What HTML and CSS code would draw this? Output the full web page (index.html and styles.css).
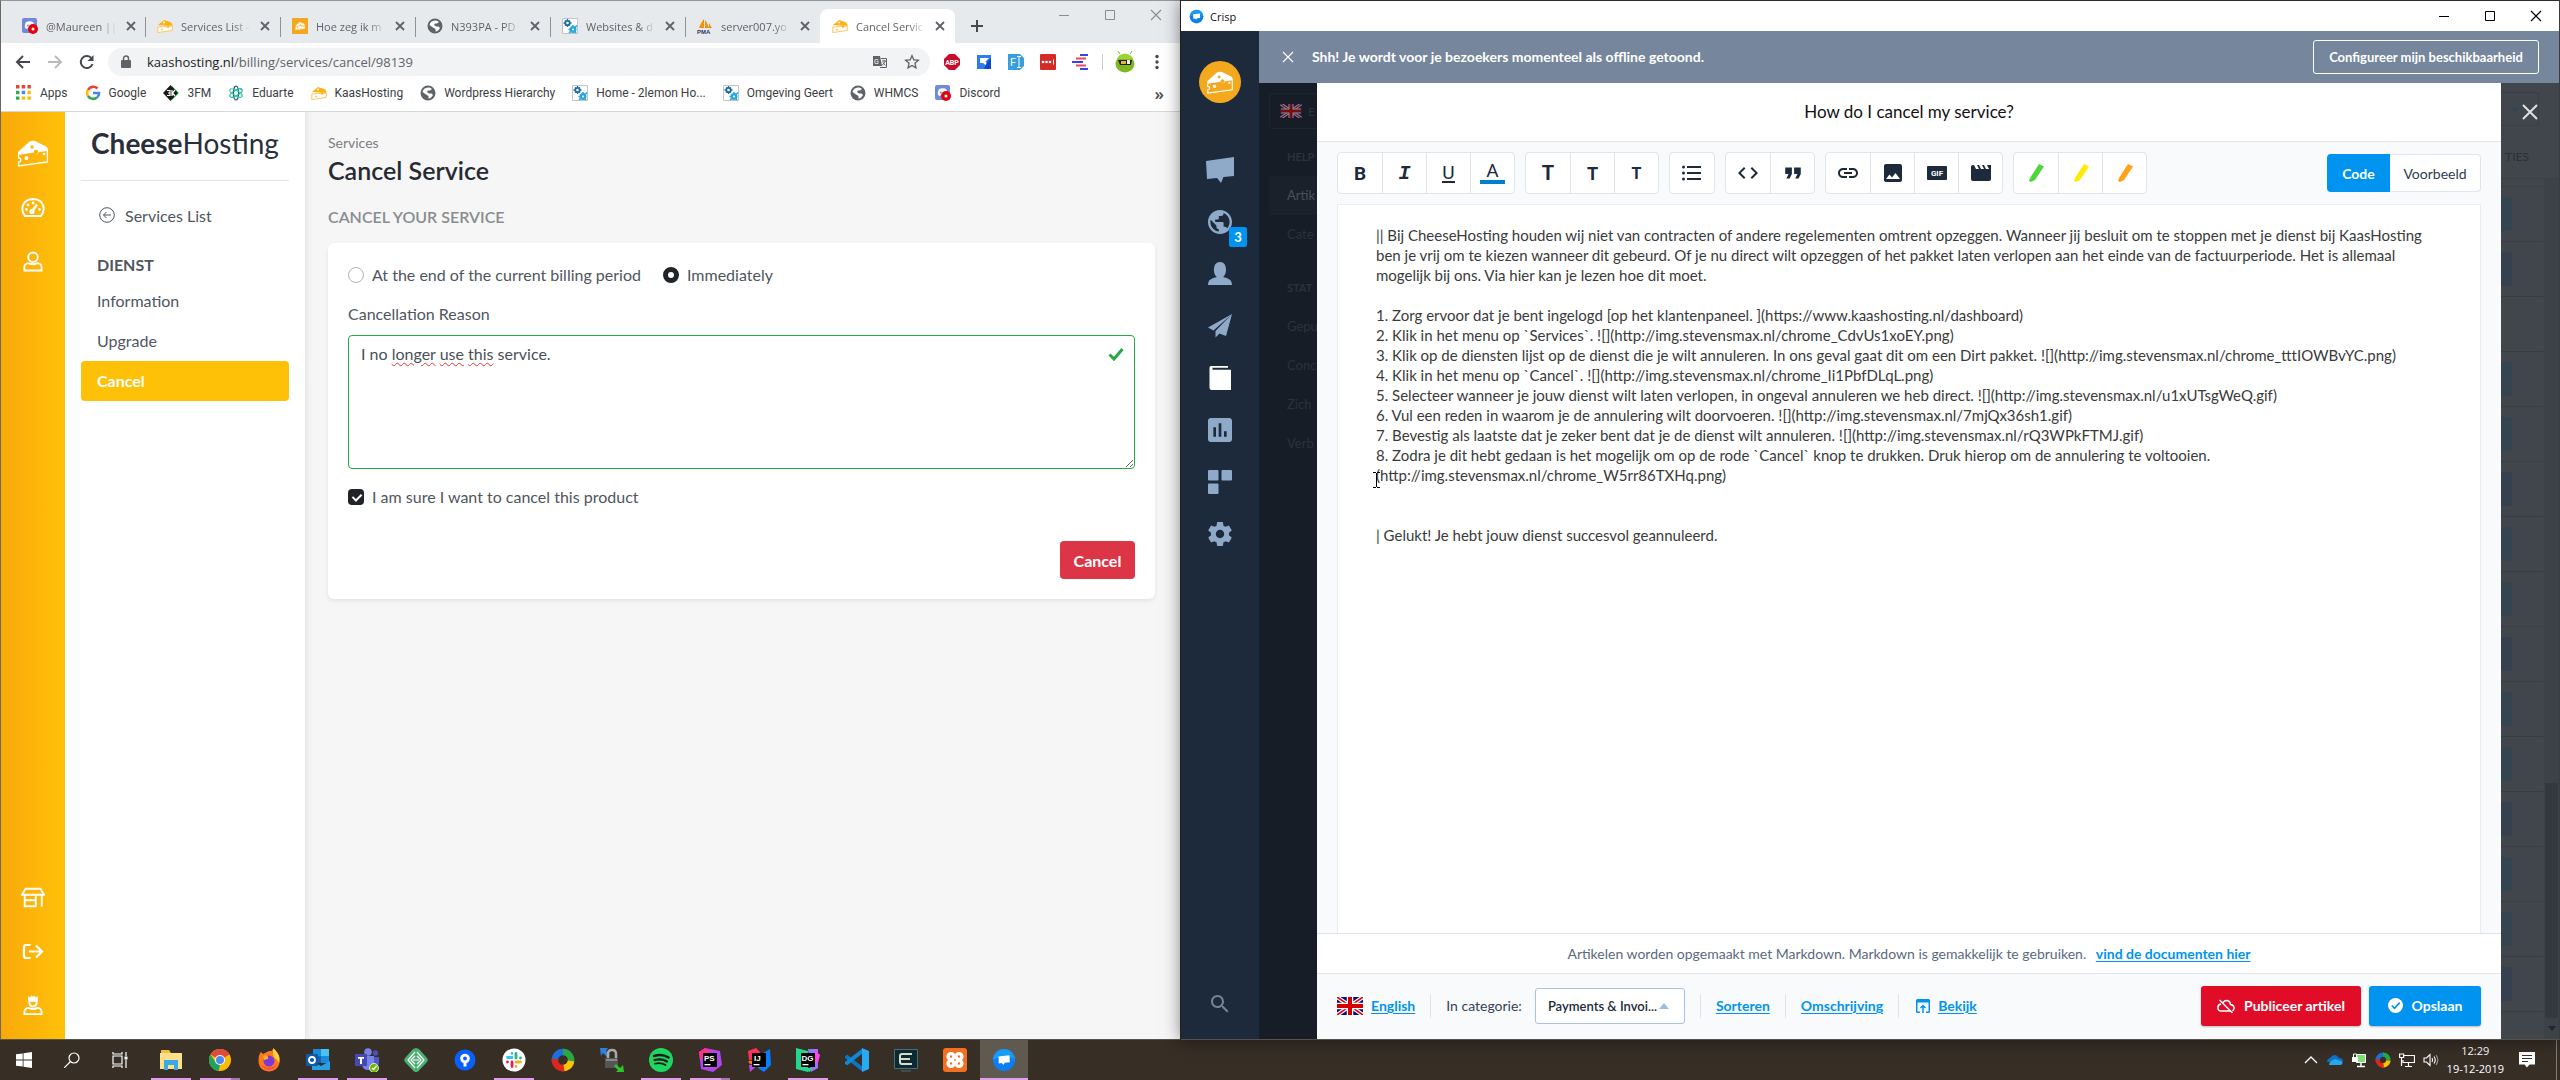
FILE: index.html
```
<!DOCTYPE html>
<html lang="nl">
  <head>
    <meta charset="UTF-8">
    <title>Desktop</title>
    <link rel="stylesheet" href="styles.css">
  </head>
  <body>

    <!-- shared icons -->
    <svg class="sprite" aria-hidden="true">
      <symbol id="i-close" viewBox="0 0 12 12"><path d="M2 2l8 8M10 2l-8 8" fill="none" stroke="currentColor" stroke-width="1.8"/></symbol>
      <symbol id="i-thinclose" viewBox="0 0 12 12"><path d="M1 1l10 10M11 1L1 11" fill="none" stroke="currentColor" stroke-width="1.1"/></symbol>
      <symbol id="i-min" viewBox="0 0 12 12"><path d="M1 6.500h10" fill="none" stroke="currentColor"/></symbol>
      <symbol id="i-max" viewBox="0 0 12 12"><path d="M1.500 1.500h9v9h-9z" fill="none" stroke="currentColor"/></symbol>
      <symbol id="i-cheese" viewBox="0 0 32 26"><path fill="currentColor" d="M1 13L13 2c2-1.500 4-1 6-.5l9 4c2 1 3 2 3 4zM1 15l30-4v11L1 26v-4c3 0 3-4 0-4z"/><g fill="var(--hole)"><circle cx="9" cy="18.500" r="2.200"/><circle cx="17" cy="8" r="1.800"/><circle cx="20" cy="12.500" r="2"/><circle cx="26" cy="14.500" r="1.600"/><path d="M3 23.500v1l26-3.500v-1z"/></g></symbol>
      <symbol id="i-cheese-line" viewBox="0 0 32 27"><path fill="currentColor" d="M1 12L12 2c3-2 6-1 8 0l8 4c3 1.500 3 3 3 5L22 12c-1 3-4 3-5 .6L1 15z"/><path fill="none" stroke="currentColor" stroke-width="1.300" d="M1.600 15v3c3 0 3 4 0 4v4L30.400 22V11"/><circle cx="9.500" cy="18" r="2" fill="currentColor"/><circle cx="27" cy="14" r="1.300" fill="currentColor"/><circle cx="15" cy="7" r="1.700" fill="var(--hole)"/><circle cx="19" cy="12" r="2.200" fill="var(--hole)"/></symbol>
      <symbol id="i-cheese-fav" viewBox="0 0 16 16"><path fill="#ffb012" d="M1 7l6-5 6 2c2 1 2.500 2 2.500 4z"/><path fill="#fff" stroke="#ffc65c" d="M.8 9l14.500-1v4.500L.8 14.500z"/><circle cx="7" cy="4.500" r="1" fill="#fff"/><circle cx="5" cy="11.500" r="1" fill="#ffc65c"/><circle cx="11" cy="8.500" r="1.200" fill="#ffb012"/></symbol>
      <symbol id="i-earth" viewBox="2 2 20 20"><path fill="currentColor" d="M12 2C6.480 2 2 6.480 2 12s4.480 10 10 10 10-4.480 10-10S17.520 2 12 2zm-1 17.930c-3.950-.49-7-3.850-7-7.930 0-.62.08-1.210.21-1.790L9 15v1c0 1.100.9 2 2 2v1.930zm6.900-2.540c-.26-.81-1-1.390-1.900-1.390h-1v-3c0-.55-.45-1-1-1H8v-2h2c.55 0 1-.45 1-1V7h2c1.100 0 2-.9 2-2v-.41c2.930 1.190 5 4.060 5 7.410 0 2.080-.8 3.970-2.100 5.390z"/></symbol>
      <symbol id="i-wpglobe" viewBox="0 0 16 16"><circle cx="8" cy="8" r="7.500" fill="#5f6368"/><path fill="#fff" d="M8 2.500c2 0 3 .6 4 1.500l-2 1.500H8L7 7l2 1.500h2.500L13 10c-1 2-2.500 3.300-4.500 3.500V11L6 9.500 2.500 7C3 4.500 5 2.600 8 2.500z"/></symbol>
      <symbol id="i-gears" viewBox="0 0 16 16"><path fill="#fff" stroke="#c4c4c4" d="M.5.5h15v15H.5z"/><circle cx="5.500" cy="5" r="2.200" fill="none" stroke="#1b6f9c" stroke-width="1.800"/><path stroke="#1b6f9c" stroke-width="1.300" d="M5.500 1v1.500M5.500 7.500V9M1.500 5H3M8 5h1.500M3 2.500l1 1M7 6.500l1 1M8 2.500l-1 1M3 7.500l1-1"/><circle cx="11" cy="11.500" r="2.300" fill="none" stroke="#2ba7e0" stroke-width="2.400"/><path stroke="#2ba7e0" stroke-width="1.600" d="M11 7v2M7 15l2-2M15 7.500l-2 2M6.500 11.500H8M14 15l-1-1"/></symbol>
      <symbol id="i-discord" viewBox="0 0 16 16"><rect width="15" height="15" rx="2" fill="#7289da"/><path fill="#fff" d="M4 4c3-1 5-1 7 0 1 2 2 4 1.500 6l-2 1-1-1H6l-1 1-2-1C2.500 8 3 6 4 4z"/><circle cx="5.800" cy="7.500" r="1" fill="#7289da"/><circle cx="11" cy="11" r="5" fill="#e3000f"/><circle cx="11" cy="11" r="1.500" fill="#fff"/></symbol>
      <symbol id="i-crisp" viewBox="0 0 24 24"><circle cx="12" cy="12" r="11" fill="#0d7df2"/><path fill="#1fb4ff" d="M12 1a11 11 0 0 1 11 11c-5-4-16-4-22 0A11 11 0 0 1 12 1z" opacity=".55"/><path fill="#fff" d="M6.500 8.500l11-1.300.3 7-5 .6-1.500 2.200-1.500-1.900-3 .3z"/></symbol>
      <symbol id="i-flag" viewBox="0 0 26 18"><path fill="#0b0b78" d="M0 0h26v18H0z"/><path stroke="#fff" stroke-width="4" d="M0 0l26 18M26 0L0 18"/><path stroke="#d00" stroke-width="1.600" d="M0 0l26 18M26 0L0 18"/><path stroke="#fff" stroke-width="6.500" d="M13 0v18M0 9h26"/><path stroke="#d40000" stroke-width="4" d="M13 0v18M0 9h26"/></symbol>
      <symbol id="i-swirl" viewBox="0 0 24 24"><g fill="none" stroke-width="6.500"><path stroke="#1c6fe0" d="M4 13a8 8 0 0 1 9-9"/><path stroke="#28a745" d="M12 4a8 8 0 0 1 7.500 11"/><path stroke="#ffc107" d="M20 13a8 8 0 0 1-9 7"/><path stroke="#e0261c" d="M13 20A8 8 0 0 1 4 11"/></g></symbol>
    </svg>

    <div class="desktop">

      <!-- browser window -->
      <section class="browser">
        <header class="tabstrip">
          <nav class="tabs">
            <div class="tab"><svg class="fav"><use href="#i-discord"/></svg><span>@Maureen ||</span><button aria-label="Close tab"><svg><use href="#i-close"/></svg></button></div>
            <div class="tab"><svg class="fav"><use href="#i-cheese-fav"/></svg><span>Services List -</span><button aria-label="Close tab"><svg><use href="#i-close"/></svg></button></div>
            <div class="tab"><svg class="fav fav-orange"><use href="#i-cheese"/></svg><span>Hoe zeg ik m</span><button aria-label="Close tab"><svg><use href="#i-close"/></svg></button></div>
            <div class="tab"><svg class="fav"><use href="#i-wpglobe"/></svg><span>N393PA - PD</span><button aria-label="Close tab"><svg><use href="#i-close"/></svg></button></div>
            <div class="tab"><svg class="fav"><use href="#i-gears"/></svg><span>Websites &amp; d</span><button aria-label="Close tab"><svg><use href="#i-close"/></svg></button></div>
            <div class="tab last"><svg class="fav" viewBox="0 0 16 16"><path fill="#f29111" d="M7 10V1c-2 2-4 6-5 9zM8 10V2c2 2 3 5 4 8zM12 10V5l3 5z"/><text x="0" y="16" font-size="6" font-weight="700" fill="#34345c" font-family="Liberation Sans, sans-serif">PMA</text></svg><span>server007.yo</span><button aria-label="Close tab"><svg><use href="#i-close"/></svg></button></div>
            <div class="tab active"><svg class="fav"><use href="#i-cheese-fav"/></svg><span>Cancel Servic</span><button aria-label="Close tab"><svg><use href="#i-close"/></svg></button></div>
          </nav>
          <button class="newtab" aria-label="New tab"><svg viewBox="0 0 14 14"><path d="M7 1v12M1 7h12" stroke="#45494d" stroke-width="2"/></svg></button>
          <div class="wincontrols">
            <button aria-label="Minimize"><svg><use href="#i-min"/></svg></button>
            <button aria-label="Maximize"><svg><use href="#i-max"/></svg></button>
            <button aria-label="Close"><svg><use href="#i-thinclose"/></svg></button>
          </div>
        </header>

        <div class="toolbar">
          <button aria-label="Back"><svg viewBox="0 0 16 16"><path d="M15 8H2M8 2L2 8l6 6" fill="none" stroke="#45494d" stroke-width="2"/></svg></button>
          <button aria-label="Forward"><svg viewBox="0 0 16 16"><path d="M1 8h13M8 2l6 6-6 6" fill="none" stroke="#b9bbbe" stroke-width="2"/></svg></button>
          <button aria-label="Reload"><svg viewBox="0 0 16 16"><path d="M13.500 10A6 6 0 1 1 12 3.700" fill="none" stroke="#45494d" stroke-width="2"/><path fill="#45494d" d="M14.500 1v6h-6z"/></svg></button>
          <div class="omnibox">
            <svg class="lock" viewBox="0 0 10 14"><rect y="5" width="10" height="8" rx="1" fill="#5f6368"/><path d="M2.500 6V3.500a2.500 2.500 0 0 1 5 0V6" fill="none" stroke="#5f6368" stroke-width="1.500"/></svg>
            <div class="url"><b>kaashosting.nl</b>/billing/services/cancel/98139</div>
            <svg viewBox="0 0 16 16"><path fill="#5f6368" d="M1 2h7l2 10H1z"/><path fill="none" stroke="#5f6368" d="M9 4.500h5.500v9H8"/><text x="2" y="9.500" font-size="7" fill="#fff" font-family="Roboto, sans-serif">G</text><path stroke="#5f6368" d="M10 7h4M12 6v1M13.500 7L10 11.500M11 8.500l2.500 3"/></svg>
            <svg viewBox="2 2 20 20"><path fill="#5f6368" d="M22 9.240l-7.190-.62L12 2 9.190 8.630 2 9.240l5.460 4.730L5.820 21 12 17.270 18.180 21l-1.630-7.030L22 9.240zM12 15.400l-3.760 2.270 1-4.280-3.320-2.880 4.380-.38L12 6.100l1.710 4.040 4.380.38-3.320 2.880 1 4.280L12 15.400z"/></svg>
          </div>
          <div class="extensions">
            <svg viewBox="0 0 16 16"><path fill="#c70d2c" d="M5 0h6l5 5v6l-5 5H5l-5-5V5z"/><text x="8" y="10.600" font-size="7" font-weight="700" fill="#fff" text-anchor="middle" font-family="Roboto, sans-serif">ABP</text></svg>
            <svg viewBox="0 0 16 16"><path fill="#2f7de8" d="M1 1h14v14H1z"/><path fill="#fff" d="M4 4h9L9.500 7.500 12 10v3L7 9H4z"/><path fill="#0c4ccc" d="M11 8l4-4v11H8z"/></svg>
            <svg viewBox="0 0 16 16"><path fill="#379ee0" d="M0 0h12l4 4v8l-4 4H0z"/><text x="2" y="12" font-size="11" fill="#fff" font-family="Roboto, sans-serif">F</text><path stroke="#fff" d="M11 3v10M9 2.500h4M9 13.500h4"/></svg>
            <svg viewBox="0 0 16 16"><rect width="16" height="16" rx="1" fill="#d52b28"/><g fill="#fff"><circle cx="3" cy="8" r="1.300"/><circle cx="6.500" cy="8" r="1.300"/><circle cx="10" cy="8" r="1.300"/><path d="M13 5.500h1v5h-1z"/></g></svg>
            <svg viewBox="0 0 16 16"><path stroke="#3b3ff0" stroke-width="2" d="M8 1h8M0 8h11M8 15h8"/><path stroke="#f2475b" stroke-width="2" d="M4 4.500h10M4 11.500h10"/></svg>
            <i></i>
            <svg class="profile" viewBox="0 0 20 22"><ellipse cx="10" cy="13" rx="9.500" ry="8.500" fill="#7fb921"/><path fill="#9bd432" d="M2 8c2-7 14-7 16 0z"/><path stroke="#7fb921" d="M5 3L3 0M15 3l2-3"/><path fill="#222" d="M3 9h14l-1 5H5z"/><path fill="#e9b23a" d="M6 10h5v3H6z"/><path fill="#eee" d="M12 9h3v4h-3z"/></svg>
            <svg class="dots" viewBox="0 0 16 16"><g fill="#45494d"><circle cx="8" cy="2.500" r="1.700"/><circle cx="8" cy="8" r="1.700"/><circle cx="8" cy="13.500" r="1.700"/></g></svg>
          </div>
        </div>

        <nav class="bookmarks">
          <a href="#"><svg viewBox="0 0 14 14"><path fill="#ea4335" d="M0 0h3v3H0zM5 0h3v3H5zM10 0h3v3h-3z"/><path fill="#34a853" d="M0 5h3v3H0zM0 10h3v3H0z"/><path fill="#4285f4" d="M5 5h3v3H5z"/><path fill="#fbbc05" d="M10 5h3v3h-3zM5 10h3v3H5zM10 10h3v3h-3z"/></svg>Apps</a>
          <a href="#"><svg viewBox="0 0 16 16"><g fill="none" stroke-width="2.600"><path stroke="#ea4335" d="M3 5a6 6 0 0 1 9.500-1.500"/><path stroke="#fbbc05" d="M3 11a6 6 0 0 1 0-6"/><path stroke="#34a853" d="M3 11a6 6 0 0 0 9 1.500"/><path stroke="#4285f4" d="M8 8h6c0 2-.5 3.500-2 4.500"/></g></svg>Google</a>
          <a href="#"><svg viewBox="0 0 16 16"><path fill="#14e04a" d="M9 1l7 7-7 7z"/><path fill="#1a1a1a" d="M7.500 0l7.500 8-7.500 8L0 8z"/><path fill="none" stroke="#fff" stroke-width="1.200" d="M4 5.500h3v5H4M5 8h2M9 5v6M12 5L9.500 8l2.500 3"/></svg>3FM</a>
          <a href="#"><svg viewBox="0 0 16 16"><g fill="none" stroke-width="1.200"><ellipse cx="8" cy="8" rx="2.500" ry="7" stroke="#23408f"/><ellipse cx="8" cy="8" rx="2.500" ry="7" stroke="#1fb59a" transform="rotate(60 8 8)"/><ellipse cx="8" cy="8" rx="2.500" ry="7" stroke="#35cf8d" transform="rotate(120 8 8)"/></g></svg>Eduarte</a>
          <a href="#"><svg><use href="#i-cheese-fav"/></svg>KaasHosting</a>
          <a href="#"><svg><use href="#i-wpglobe"/></svg>Wordpress Hierarchy</a>
          <a href="#"><svg><use href="#i-gears"/></svg>Home - 2lemon Ho...</a>
          <a href="#"><svg><use href="#i-gears"/></svg>Omgeving Geert</a>
          <a href="#"><svg><use href="#i-wpglobe"/></svg>WHMCS</a>
          <a href="#"><svg><use href="#i-discord"/></svg>Discord</a>
          <button class="more" aria-label="More bookmarks">»</button>
        </nav>

        <div class="site">
          <nav class="rail">
            <a href="#" aria-label="Home"><svg class="wide"><use href="#i-cheese-line"/></svg></a>
            <a href="#" aria-label="Dashboard"><svg viewBox="0 0 24 20"><path fill="none" stroke="#fff" stroke-width="2" d="M4 18.500C-1 12 1 2 12 1.500 23 2 25 12 20 18.500z"/><path stroke="#fff" stroke-width="2.500" d="M11 14l5-7"/><g fill="#fff"><circle cx="11" cy="14" r="2.600"/><circle cx="5.500" cy="12" r="1.400"/><circle cx="7" cy="7.500" r="1.400"/><circle cx="12" cy="5.500" r="1.400"/><circle cx="18.500" cy="12" r="1.400"/></g></svg></a>
            <a href="#" aria-label="Account"><svg viewBox="0 0 24 22"><g fill="none" stroke="#fff" stroke-width="2"><circle cx="12" cy="6.500" r="5"/><path d="M6.500 13h1.500c2.500 1 5.500 1 8 0h1.500c2 0 3.500 2 3.500 4v3.500H3V17c0-2 1.500-4 3.500-4z"/></g></svg></a>
            <span class="spacer"></span>
            <a href="#" aria-label="Shop"><svg viewBox="0 0 26 22"><g fill="none" stroke="#fff" stroke-width="2"><path d="M5 1.500h16l4 6.500H1zM4 8v12.500h12V8M4 14h12M22.500 8v13"/></g></svg></a>
            <a href="#" aria-label="Logout"><svg viewBox="0 0 24 18"><g fill="none" stroke="#fff" stroke-width="2.200"><path d="M9.500 2.500H5q-2 0-2 2v9q0 2 2 2h4.500M8 9h13M15 3l6 6-6 6"/></g></svg></a>
            <a href="#" aria-label="Staff"><svg viewBox="0 0 20 22"><path fill="#fff" d="M5 1l2 1.500L8.500.5 10 2l1.500-1.500L13 2.500 15 1v6H5z"/><path fill="none" stroke="#fff" stroke-width="2" d="M6 6c0 8 8 8 8 0M5 13.500c3 1.500 7 1.500 10 0 2 0 4 2 4 4V20H1v-2.500c0-2 2-4 4-4z"/></svg></a>
          </nav>

          <aside class="panel">
            <div class="brand"><b>Cheese</b>Hosting</div>
            <a href="#" class="back"><svg viewBox="0 0 16 16"><circle cx="8" cy="8" r="7.300" fill="none" stroke="#4f5660"/><path d="M12 8H4.500M7.500 5l-3 3 3 3" fill="none" stroke="#4f5660"/></svg>Services List</a>
            <h4>DIENST</h4>
            <a href="#">Information</a>
            <a href="#">Upgrade</a>
            <a href="#" class="current">Cancel</a>
          </aside>

          <main class="content">
            <div class="crumb">Services</div>
            <h1>Cancel Service</h1>
            <h2>CANCEL YOUR SERVICE</h2>
            <form class="card">
              <div class="row">
                <input type="radio" name="when" id="end"><label for="end">At the end of the current billing period</label>
                <input type="radio" name="when" id="now" checked><label for="now">Immediately</label>
              </div>
              <label for="reason">Cancellation Reason</label>
              <div class="reason">
                <textarea id="reason" spellcheck="false">I no longer use this service.</textarea>
                <div class="spelling" aria-hidden="true">I no <u>longer</u> <u>use</u> <u>this</u></div>
                <svg class="valid" viewBox="0 0 16 14"><path d="M1.500 7.500L6 12 14.500 2" fill="none" stroke="#28a745" stroke-width="3"/></svg>
              </div>
              <div class="row">
                <input type="checkbox" id="sure" checked><label for="sure">I am sure I want to cancel this product</label>
              </div>
              <button type="button" class="danger">Cancel</button>
            </form>
          </main>
        </div>
      </section>

      <!-- crisp window -->
      <section class="crisp">
        <header class="titlebar">
          <svg class="logo"><use href="#i-crisp"/></svg><span>Crisp</span>
          <div class="wincontrols">
            <button aria-label="Minimize"><svg><use href="#i-min"/></svg></button>
            <button aria-label="Maximize"><svg><use href="#i-max"/></svg></button>
            <button aria-label="Close"><svg><use href="#i-thinclose"/></svg></button>
          </div>
        </header>

        <div class="app">
          <nav class="menu">
            <div class="avatar"><svg><use href="#i-cheese-line"/></svg></div>
            <a href="#" aria-label="Inbox"><svg viewBox="0 0 28 26"><path fill="currentColor" d="M0 4L28 0l.5 19-11 1-2.500 6-4-5L1 22z"/></svg></a>
            <a href="#" aria-label="Visitors"><svg><use href="#i-earth"/></svg><span class="count">3</span></a>
            <a href="#" aria-label="Contacts"><svg viewBox="0 0 24 24"><path fill="currentColor" d="M12 0c8 0 7 13 3 15 4 1 9 2 9 8H0c0-6 5-7 9-8C5 13 4 0 12 0z"/></svg></a>
            <a href="#" aria-label="Campaigns"><svg viewBox="0 0 24 24"><path fill="currentColor" d="M24 0L0 13.500l5.500 3zM24 0L7.500 17v6.500l4-4 6.500 2.500z"/></svg></a>
            <a href="#" class="on" aria-label="Helpdesk"><svg viewBox="0 0 24 24"><path fill="currentColor" d="M3 0h17v1.800H4.500V3.800H23V24H4q-2.500 0-2.500-2.500v-20Q1.500 0 3 0z"/></svg></a>
            <a href="#" aria-label="Analytics"><svg viewBox="3 3 18 18"><path fill="currentColor" d="M19 3H5c-1.100 0-2 .9-2 2v14c0 1.100.9 2 2 2h14c1.100 0 2-.9 2-2V5c0-1.100-.9-2-2-2zM9 17H7v-7h2v7zm4 0h-2V7h2v10zm4 0h-2v-4h2v4z"/></svg></a>
            <a href="#" aria-label="Plugins"><svg viewBox="0 0 24 24"><g fill="currentColor"><rect width="10.500" height="10.500" rx="1"/><rect x="13.500" width="10.500" height="10.500" rx="1"/><rect y="13.500" width="10.500" height="10.500" rx="1"/></g></svg></a>
            <a href="#" aria-label="Settings"><svg viewBox="2 2 20 20"><path fill="currentColor" d="M19.430 12.980c.04-.32.07-.64.07-.98s-.03-.66-.07-.98l2.110-1.650c.19-.15.24-.42.12-.64l-2-3.460c-.12-.22-.39-.3-.61-.22l-2.490 1c-.52-.4-1.080-.73-1.690-.98l-.38-2.650C14.460 2.180 14.250 2 14 2h-4c-.25 0-.46.18-.49.42l-.38 2.650c-.61.25-1.170.59-1.690.98l-2.490-1c-.23-.09-.49 0-.61.22l-2 3.460c-.13.22-.07.49.12.64l2.110 1.650c-.04.32-.07.65-.07.98s.03.66.07.98l-2.110 1.650c-.19.15-.24.42-.12.64l2 3.460c.12.22.39.3.61.22l2.490-1c.52.4 1.080.73 1.690.98l.38 2.650c.03.24.24.42.49.42h4c.25 0 .46-.18.49-.42l.38-2.650c.61-.25 1.170-.59 1.690-.98l2.490 1c.23.09.49 0 .61-.22l2-3.460c.12-.22.07-.49-.12-.64l-2.110-1.650zM12 15.500c-1.930 0-3.500-1.570-3.500-3.500s1.570-3.500 3.500-3.500 3.500 1.570 3.500 3.500-1.570 3.500-3.500 3.500z"/></svg></a>
            <span class="spacer"></span>
            <a href="#" class="find" aria-label="Search"><svg viewBox="3 3 18 18"><path fill="currentColor" d="M15.500 14h-.79l-.28-.27C15.410 12.590 16 11.110 16 9.500 16 5.910 13.090 3 9.500 3S3 5.910 3 9.500 5.910 16 9.500 16c1.610 0 3.090-.59 4.230-1.570l.27.28v.79l5 4.990L20.490 19l-4.990-5zm-6 0C7.010 14 5 11.990 5 9.500S7.010 5 9.500 5 14 7.010 14 9.500 11.990 14 9.500 14z"/></svg></a>
          </nav>

          <div class="workspace">
            <div class="banner">
              <button class="dismiss" aria-label="Dismiss"><svg><use href="#i-thinclose"/></svg></button>
              <p>Shh! Je wordt voor je bezoekers momenteel als offline getoond.</p>
              <button class="outline">Configureer mijn beschikbaarheid</button>
            </div>

            <div class="stage">
              <div class="dim-left">
                <div class="lang"><svg><use href="#i-flag"/></svg>E</div>
                <h5>HELP</h5>
                <p class="sel">Artik</p>
                <p>Cate</p>
                <h5 class="second">STAT</h5>
                <p>Gepu</p>
                <p>Conc</p>
                <p>Zich</p>
                <p>Verb</p>
              </div>

              <article class="modal">
                <h3>How do I cancel my service?</h3>
                <div class="editor">
                  <div class="tools">
                    <div class="group">
                      <button><b>B</b></button><button><em>I</em></button><button><span class="under">U</span></button><button><span class="colour">A</span></button>
                    </div>
                    <div class="group">
                      <button><b class="t1">T</b></button><button><b class="t2">T</b></button><button><b class="t3">T</b></button>
                    </div>
                    <div class="group">
                      <button aria-label="List"><svg viewBox="0 0 20 16"><g fill="currentColor"><circle cx="1.500" cy="2" r="1.500"/><circle cx="1.500" cy="8" r="1.500"/><circle cx="1.500" cy="14" r="1.500"/><path d="M5 1h14v2H5zM5 7h14v2H5zM5 13h14v2H5z"/></g></svg></button>
                    </div>
                    <div class="group">
                      <button aria-label="Code"><svg viewBox="2 3 20 18"><path fill="currentColor" d="M9.400 16.600L4.800 12l4.600-4.600L8 6l-6 6 6 6 1.400-1.400zm5.200 0l4.600-4.600-4.600-4.600L16 6l6 6-6 6-1.400-1.400z"/></svg></button><button aria-label="Quote"><svg viewBox="3 4 18 16"><path fill="currentColor" d="M6 17h3l2-4V7H5v6h3zm8 0h3l2-4V7h-6v6h3z"/></svg></button>
                    </div>
                    <div class="group">
                      <button aria-label="Link"><svg viewBox="2 3 20 18"><path fill="currentColor" d="M3.900 12c0-1.710 1.390-3.100 3.100-3.100h4V7H7c-2.760 0-5 2.240-5 5s2.240 5 5 5h4v-1.900H7c-1.710 0-3.100-1.390-3.100-3.100zM8 13h8v-2H8v2zm9-6h-4v1.900h4c1.710 0 3.100 1.390 3.100 3.100s-1.390 3.100-3.100 3.100h-4V17h4c2.760 0 5-2.240 5-5s-2.240-5-5-5z"/></svg></button><button aria-label="Image"><svg viewBox="3 3 18 18"><path fill="currentColor" d="M21 19V5c0-1.100-.9-2-2-2H5c-1.100 0-2 .9-2 2v14c0 1.100.9 2 2 2h14c1.100 0 2-.9 2-2zM8.500 13.500l2.500 3.010L14.500 12l4.500 6H5l3.500-4.500z"/></svg></button><button aria-label="Gif"><svg viewBox="0 0 20 16"><rect y="1" width="20" height="14" rx="1" fill="currentColor"/><text x="10" y="11" font-size="8" font-weight="700" text-anchor="middle" fill="#fff" font-family="Roboto, sans-serif">GIF</text></svg></button><button aria-label="Video"><svg viewBox="2 3 20 18"><path fill="currentColor" d="M18 4l2 4h-3l-2-4h-2l2 4h-3l-2-4H8l2 4H7L5 4H4c-1.100 0-1.990.9-1.990 2L2 18c0 1.100.9 2 2 2h16c1.100 0 2-.9 2-2V4h-4z"/></svg></button>
                    </div>
                    <div class="group">
                      <button aria-label="Green mark"><svg viewBox="0 0 16 18"><path fill="#4fd63a" d="M11 0l5 2.500L7 16l-4 2-2-1 1-3z"/></svg></button><button aria-label="Yellow mark"><svg viewBox="0 0 16 18"><path fill="#ffeb00" d="M11 0l5 2.500L7 16l-4 2-2-1 1-3z"/></svg></button><button aria-label="Orange mark"><svg viewBox="0 0 16 18"><path fill="#ffa114" d="M11 0l5 2.500L7 16l-4 2-2-1 1-3z"/></svg></button>
                    </div>
                    <div class="switch"><button class="on">Code</button><button>Voorbeeld</button></div>
                  </div>
                  <div class="paper">
                    <textarea aria-label="Article" spellcheck="false">
|| Bij CheeseHosting houden wij niet van contracten of andere regelementen omtrent opzeggen. Wanneer jij besluit om te stoppen met je dienst bij KaasHosting
ben je vrij om te kiezen wanneer dit gebeurd. Of je nu direct wilt opzeggen of het pakket laten verlopen aan het einde van de factuurperiode. Het is allemaal
mogelijk bij ons. Via hier kan je lezen hoe dit moet.

1. Zorg ervoor dat je bent ingelogd [op het klantenpaneel. ](https://www.kaashosting.nl/dashboard)
2. Klik in het menu op `Services`. ![](http://img.stevensmax.nl/chrome_CdvUs1xoEY.png)
3. Klik op de diensten lijst op de dienst die je wilt annuleren. In ons geval gaat dit om een Dirt pakket. ![](http://img.stevensmax.nl/chrome_tttIOWBvYC.png)
4. Klik in het menu op `Cancel`. ![](http://img.stevensmax.nl/chrome_Ii1PbfDLqL.png)
5. Selecteer wanneer je jouw dienst wilt laten verlopen, in ongeval annuleren we heb direct. ![](http://img.stevensmax.nl/u1xUTsgWeQ.gif)
6. Vul een reden in waarom je de annulering wilt doorvoeren. ![](http://img.stevensmax.nl/7mjQx36sh1.gif)
7. Bevestig als laatste dat je zeker bent dat je de dienst wilt annuleren. ![](http://img.stevensmax.nl/rQ3WPkFTMJ.gif)
8. Zodra je dit hebt gedaan is het mogelijk om op de rode `Cancel` knop te drukken. Druk hierop om de annulering te voltooien.
(http://img.stevensmax.nl/chrome_W5rr86TXHq.png)


| Gelukt! Je hebt jouw dienst succesvol geannuleerd.</textarea>
                    <svg class="ibeam" viewBox="0 0 7 16"><path d="M0 .5h3M4 .5h3M3.500 1v14M0 15.500h3M4 15.500h3" stroke="#000"/></svg>
                  </div>
                </div>
                <p class="hint">Artikelen worden opgemaakt met Markdown. Markdown is gemakkelijk te gebruiken. <a href="#">vind de documenten hier</a></p>
                <footer class="actions">
                  <a href="#" class="language"><svg><use href="#i-flag"/></svg><span>English</span></a>
                  <i></i>
                  <label for="category">In categorie:</label>
                  <div class="category">
                    <select id="category"><option>Payments &amp; Invoi...</option></select>
                    <svg viewBox="0 0 10 6"><path fill="#9dbde0" d="M5 0l5 6H0z"/></svg>
                  </div>
                  <i></i>
                  <a href="#">Sorteren</a>
                  <i></i>
                  <a href="#">Omschrijving</a>
                  <i></i>
                  <a href="#" class="view"><svg viewBox="0 0 14 14"><path fill="#0094f0" d="M1.500 0h11Q14 0 14 1.500v11Q14 14 12.500 14H10v-1.500h2.500V3.500h-11v9H4V14H1.500Q0 14 0 12.500v-11Q0 0 1.500 0z"/><path fill="none" stroke="#0094f0" stroke-width="1.500" d="M7 14V7M4.500 9L7 6.500 9.500 9"/></svg><span>Bekijk</span></a>
                  <span class="spacer"></span>
                  <button class="red"><svg viewBox="0 0 18 14"><path fill="none" stroke="#fff" stroke-width="1.500" d="M6 3.500C9-.5 13.500 2 13.500 5.500 17.500 6 18 10 15.500 12M4 5C0 5.500-.5 12 4.500 12h8M2.500 1l13 13"/></svg>Publiceer artikel</button>
                  <button class="blue"><svg viewBox="0 0 16 16"><circle cx="8" cy="8" r="8" fill="#fff"/><path d="M4 8l3 3 5.500-6" fill="none" stroke="#0094f0" stroke-width="1.800"/></svg>Opslaan</button>
                </footer>
              </article>

              <div class="dim-right">
                <button class="leave" aria-label="Close article"><svg viewBox="0 0 16 16"><path d="M1 1l14 14M15 1L1 15" stroke="#dfe0e2" stroke-width="2"/></svg></button>
                <div class="filter"><span></span><svg viewBox="0 0 8 5"><path d="M1 0l3 4 3-4" fill="none" stroke="#1f4b63" stroke-width="1.500"/></svg></div>
                <div class="head">TIES</div>
                <div class="list">
                  <div class="items"><div><b></b></div><div><b class="b"></b></div><div></div><div><b></b></div><div><b></b></div><div><b class="b"></b></div><div><b></b></div><div><b></b></div><div><b class="b"></b></div><div><b></b></div><div><b></b></div><div><b class="b"></b></div><div><b></b></div><div><b></b></div><div><b class="b"></b></div><div></div></div>
                  <div class="scroll"><i></i><svg viewBox="0 0 8 5"><path fill="#22262b" d="M0 0h8L4 5z"/></svg></div>
                </div>
              </div>
            </div>
          </div>
        </div>
      </section>
    </div>

    <!-- taskbar -->
    <footer class="taskbar">
      <button aria-label="Start"><svg viewBox="0 0 16 16"><path fill="#fff" d="M0 2.300L6.700 1.400v6.200H0zM7.500 1.300L16 0v7.600H7.500zM0 8.400h6.700v6.200L0 13.700zM7.500 8.400H16V16l-8.500-1.300z"/></svg></button>
      <button aria-label="Search"><svg viewBox="0 0 16 16"><g fill="none" stroke="#fff" stroke-width="1.200"><circle cx="10" cy="6" r="5"/><path d="M6.500 9.500L0 16"/></g></svg></button>
      <button aria-label="Task view"><svg viewBox="0 0 16 16"><g fill="none" stroke="#fff" stroke-width="1.200"><path d="M1 4h9v8H1zM1 0v2h9V0M1 16v-2h9v2M14 0v4M14 8v8"/></g><path fill="#fff" d="M12.500 4.500h3v3h-3z"/></svg></button>
      <div class="pinned">
        <button class="open" aria-label="Explorer"><svg viewBox="0 0 24 24"><path fill="#f5c33b" d="M2 2h8l2 3H2z"/><path fill="#ffe08a" d="M1 5h22v16H1z"/><path fill="#3ba9e6" d="M5 12h14v10h-4v-5H9v5H5z"/></svg></button>
        <button class="open many" aria-label="Chrome"><svg viewBox="0 0 24 24"><circle cx="12" cy="12" r="11" fill="#fbbc05"/><path fill="#dd4b3e" d="M12 12L2.500 6.500a11 11 0 0 1 19 0z"/><path fill="#dd4b3e" d="M12 7h10a11 11 0 0 0-10-6z"/><path fill="#1da462" d="M2.500 6.500L8 15l4 2-1.500 6A11 11 0 0 1 2.500 6.500z"/><circle cx="12" cy="12" r="5" fill="#fff"/><circle cx="12" cy="12" r="4" fill="#4c8bf5"/></svg></button>
        <button aria-label="Firefox"><svg viewBox="0 0 24 24"><path fill="#ff7a1a" d="M12 3c2 0 3 .5 4-2 5 4 7 8 6.500 13C22 20 17 23.500 12 23.500S1.500 20 1.500 13C1.500 9 2 6 4 4l2 2c2-1 4-2 6-3z"/><path fill="#ffd23c" d="M16 0c5 4 8 9 6 15-2-5-5-4-6-8z"/><circle cx="12" cy="13" r="5.500" fill="#7d3ad6"/><path fill="#ff4a4f" d="M2 13c2 7 12 9 17 4 0 5-12 9-17-4z"/><path fill="#ffab2e" d="M6 8c4-2 6 1 5 3l-4 1z"/></svg></button>
        <button class="open" aria-label="Outlook"><svg viewBox="0 0 24 24"><path fill="#1a8bdc" d="M7 1h16v14H7z"/><path fill="#4cc2f1" d="M15 1h8v7h-8z"/><path fill="#1066b5" d="M7 8h8v7H7z"/><path fill="#28a0e8" d="M6 22V13l9 5 9-5v9z"/><path fill="#0a5ca8" d="M0 6h12v12H0z"/><circle cx="6" cy="12" r="3" fill="none" stroke="#fff" stroke-width="1.800"/></svg></button>
        <button class="open" aria-label="Teams"><svg viewBox="0 0 24 24"><circle cx="13" cy="4" r="3.800" fill="#7b83eb"/><circle cx="20.500" cy="5" r="2.700" fill="#4a52b8"/><path fill="#7b83eb" d="M7 8h12v9q-1 5-6 5t-6-5z"/><path fill="#5059c9" d="M19 9h5v7q-1 3-5 3z"/><path fill="#434bb0" d="M0 6h12v12H0z"/><path fill="#fff" d="M3 9h6v1.800H7V16H5v-5.200H3z"/><circle cx="19" cy="20" r="4.500" fill="#6bb700" stroke="#fff" stroke-width=".8"/><path d="M17 20l1.500 1.500L21.500 18" fill="none" stroke="#fff" stroke-width="1.400"/></svg></button>
        <button aria-label="Source tool"><svg viewBox="0 0 24 24"><path fill="#4caf72" d="M12 0l3 1 8 9q1.500 2 0 4l-9 9.500q-2 1-4 0L1 14q-1.500-2 0-4l8-9z"/><g fill="none" stroke="#fff" stroke-width="1.200"><path d="M11 4l-7 8 7 8M11 8l-4 4 4 4M13 4l7 8-7 8M13 8l4 4-4 4"/></g><path stroke="#fff" d="M9 12h6"/></svg></button>
        <button aria-label="Sourcetree"><svg viewBox="0 0 24 24"><circle cx="12" cy="12" r="10.500" fill="#0a5fff"/><circle cx="12" cy="10.500" r="4.800" fill="#fff"/><circle cx="12" cy="10.500" r="1.900" fill="#0a5fff"/><path fill="#fff" d="M10.500 14h3v4.500h-3z"/></svg></button>
        <button class="open" aria-label="Slack"><svg viewBox="0 0 24 24"><circle cx="12" cy="12" r="11.500" fill="#fff"/><g stroke-width="2.800" stroke-linecap="round"><path stroke="#36c5f0" d="M10 5.500v0M5.500 9.500H10"/><path stroke="#2eb67d" d="M14 5.500V10M18.500 10v0"/><path stroke="#ecb22e" d="M14 14h4.500M14 18.500v0"/><path stroke="#e01e5a" d="M10 14v4.500M5.500 14v0"/></g></svg></button>
        <button aria-label="Swirl"><svg><use href="#i-swirl"/></svg></button>
        <button aria-label="WinSCP"><svg viewBox="0 0 24 24"><path fill="#2e7fe0" d="M0 0h8L6 3l4 4-3 2-4-4-2 3z"/><path fill="none" stroke="#aaa" stroke-width="2.500" d="M8 12V6q0-4 4-4t4 4v6"/><path fill="#555" d="M5 10h13v10H5z"/><path fill="#888" d="M6 11h11v2H6z"/><path fill="#2fc52c" d="M24 24h-8l2-2-4-4 2-2 4 4 3-3z"/></svg></button>
        <button class="open" aria-label="Spotify"><svg viewBox="0 0 24 24"><circle cx="12" cy="12" r="12" fill="#1ed760"/><g fill="none" stroke="#1b1b1b" stroke-linecap="round"><path stroke-width="2.600" d="M5 8q8-2.500 14.500 1.500"/><path stroke-width="2.200" d="M5.500 12q7-2 12.500 1.500"/><path stroke-width="1.800" d="M6 15.700q6-1.500 10.500 1.300"/></g></svg></button>
        <button class="open many" aria-label="PhpStorm"><svg viewBox="0 0 24 24"><path fill="#b345f1" d="M1 4l6-4 15 3 2 14-9 7-12-3z"/><path fill="#ff318c" d="M1 4l6-4 6 3L2 12z"/><path fill="#000" d="M5 5h14v14H5z"/><text x="6" y="12.500" font-size="8" font-weight="700" fill="#fff" font-family="Liberation Sans, sans-serif">PS</text><path fill="#fff" d="M6.500 16h6v1.300h-6z"/></svg></button>
        <button aria-label="IntelliJ"><svg viewBox="0 0 24 24"><path fill="#fe315d" d="M1 3l8-3 4 4v9L2 12z"/><path fill="#f97a12" d="M1 13h6v4l-4-1z"/><path fill="#087cfa" d="M16 5l7-4 1 16-7 7-6-4z"/><path fill="#b74af7" d="M2 17h9l-8 7z"/><path fill="#000" d="M5 5h14v14H5z"/><text x="7" y="12.500" font-size="8" font-weight="700" fill="#fff" font-family="Liberation Sans, sans-serif">IJ</text><path fill="#fff" d="M6.500 16h6v1.300h-6z"/></svg></button>
        <button class="open" aria-label="DataGrip"><svg viewBox="0 0 24 24"><path fill="#22d88f" d="M0 0l12 3v21L0 21z"/><path fill="#9775f8" d="M12 1l10 0v19l-7 4z"/><path fill="#ff45ed" d="M19 2l5 5-2 8h-4z"/><path fill="#22d88f" d="M2 20h14l-2 4z"/><path fill="#000" d="M5 5h14v14H5z"/><text x="5.500" y="12.500" font-size="8" font-weight="700" fill="#fff" font-family="Liberation Sans, sans-serif">DG</text><path fill="#fff" d="M6.500 16h6v1.300h-6z"/></svg></button>
        <button aria-label="VS Code"><svg viewBox="0 0 24 24"><path fill="#0a76c4" d="M0 8.500L2 6.500 18 19v5L0 10z"/><path fill="#1089d6" d="M0 15.500L2 17.500 18 5V0L0 14z"/><path fill="#29a9f2" d="M17 0l7 3v18l-7 3z"/></svg></button>
        <button aria-label="Editor"><svg viewBox="0 0 24 24"><path fill="#0c2a33" stroke="#466f78" d="M.5 1.500h23v19H.5z"/><path fill="none" stroke="#d8dcc8" stroke-width="2" d="M18 6H8q-2 0-2 2v6q0 2 2 2h10M7 11h9"/><path stroke="#466f78" d="M7 23h10"/></svg></button>
        <button aria-label="XAMPP"><svg viewBox="0 0 24 24"><rect width="24" height="24" rx="3" fill="#f27121"/><g fill="none" stroke="#fff" stroke-width="3.400"><circle cx="8" cy="8.500" r="2.900"/><circle cx="16" cy="8.500" r="2.900"/><circle cx="8" cy="15.500" r="2.900"/><circle cx="16" cy="15.500" r="2.900"/></g></svg></button>
        <button class="open focus" aria-label="Crisp"><svg><use href="#i-crisp"/></svg></button>
      </div>
      <span class="spacer"></span>
      <div class="tray">
        <svg viewBox="0 0 16 16"><path d="M2 11l6-6 6 6" fill="none" stroke="#fff" stroke-width="1.300"/></svg>
        <svg viewBox="0 0 16 16"><path fill="#1170c8" d="M5 4q4-3 7 2 4 0 4 4H0q0-3 3-4z"/><path fill="#28a8ea" d="M4 13h10q3-2 0-4L8 7q-6 2-6 6z"/></svg>
        <svg viewBox="0 0 16 16"><path fill="#7fe07a" stroke="#fff" d="M5.500 2.500h9v8h-9z"/><path stroke="#fff" stroke-width="1.500" d="M10 11v3M6 14.500h8"/><path fill="#fff" d="M1 5h6v5H1z"/><path fill="none" stroke="#fff" d="M2.500 5V2h3v3"/></svg>
        <svg><use href="#i-swirl"/></svg>
        <svg viewBox="0 0 16 16"><g fill="none" stroke="#fff" stroke-width="1.200"><path d="M5 3.500h10.500v7H4V8M9.500 11v3M6 14.500h7M.6 2h4v3.500h-4zM2.500 5.500V14"/></g></svg>
        <svg viewBox="0 0 16 16"><g fill="none" stroke="#fff" stroke-width="1.100"><path d="M1 6h2.500L7 2.500v11L3.500 10H1zM9 6q1.300 2 0 4"/><path d="M11 4.500q2.500 3.500 0 7"/><path stroke="#999" d="M13 3q3.500 5 0 10"/></g></svg>
        <time>12:29<br>19-12-2019</time>
        <svg class="notes" viewBox="0 0 16 16"><path fill="#fff" d="M0 0h16v12.500h-5.500L8 15.500l-2.500-3H0z"/><path stroke="#372e25" d="M3 3.500h10M3 6.500h10M3 9.500h6"/></svg>
      </div>
    </footer>
  </body>
</html>
```
FILE: styles.css
```
* { box-sizing: border-box; }

body {
  margin: 0;
  min-height: 100vh;
  display: flex;
  flex-direction: column;
  font-family: Lato, sans-serif;
  background: #2b2723;
}

button {
  border: none;
  background: none;
  padding: 0;
  font-family: inherit;
  color: inherit;
  cursor: pointer;
}

h1, h2, h3, h4, h5, p { margin: 0; }
a { text-decoration: none; }
svg { display: block; flex: none; }
.sprite { position: absolute; width: 0; height: 0; }
.spacer { flex: 1; }

.desktop {
  flex: 1;
  display: grid;
  grid-template-columns: 59fr 69fr;
}

.wincontrols { display: flex; gap: 34px; }
.wincontrols svg { width: 12px; height: 12px; }

/* browser */
.browser {
  display: flex;
  flex-direction: column;
  min-width: 0;
  border-top: 1px solid #94989c;
  border-left: 1px solid #6a6861;
  border-bottom: 1px solid #57534c;
  background: #fff;
  font-family: "Open Sans", sans-serif;
}

.tabstrip {
  display: flex;
  height: 42px;
  padding: 8px 18px 0 9px;
  background: #e7eaed;
}
.tabs { display: flex; }
.tab {
  position: relative;
  display: flex;
  align-items: center;
  width: 135px;
  height: 34px;
  padding: 0 9px 0 12px;
  gap: 8px;
  font-size: 11px;
  color: #5f6368;
}
.tab::after {
  content: "";
  position: absolute;
  right: -1px;
  top: 8px;
  width: 1px;
  height: 20px;
  background: #8e9297;
}
.tab.active::after, .tab.last::after { display: none; }
.tab.active {
  background: #fff;
  border-radius: 8px 8px 0 0;
}
.tab span {
  flex: 1;
  white-space: nowrap;
  -webkit-mask-image: linear-gradient(to right, #000 75%, transparent);
  mask-image: linear-gradient(to right, #000 75%, transparent);
}
.tab .fav { width: 16px; height: 16px; }
.fav-orange { background: #f3a81d; color: #fff; padding: 3px; --hole: #f3a81d; }
.tab button svg { width: 12px; height: 12px; }
.newtab { width: 44px; height: 34px; padding-left: 15px; }
.newtab svg { width: 14px; height: 14px; }
.browser .wincontrols { margin-left: auto; color: #8a8d90; align-self: flex-start; }

.toolbar {
  display: flex;
  align-items: center;
  height: 37px;
  padding: 0 15px 0 14px;
  gap: 16px;
}
.toolbar svg { width: 16px; height: 16px; }
.omnibox {
  flex: 1;
  display: flex;
  align-items: center;
  gap: 16px;
  height: 28px;
  margin-left: -3px;
  padding: 0 10px 0 13px;
  border-radius: 14px;
  background: #f1f3f4;
}
.omnibox .lock { width: 10px; height: 14px; }
.url { flex: 1; font-size: 13px; color: #5f6368; }
.url b { font-weight: 400; color: #202124; }
.extensions { display: flex; align-items: center; gap: 16px; margin-left: -2px; }
.extensions i { width: 1px; height: 16px; margin-left: -2px; background: #c9cccf; }
.extensions .profile { width: 20px; height: 22px; margin: 0 -2px 0 -4px; }

.bookmarks {
  display: flex;
  align-items: center;
  gap: 17px;
  height: 32px;
  padding: 0 16px 5px 15px;
  border-bottom: 1px solid #d6d8da;
}
.bookmarks a {
  display: flex;
  align-items: center;
  gap: 8px;
  font: 12px Roboto, sans-serif;
  color: #3c4043;
}
.bookmarks svg { width: 16px; height: 16px; }
.bookmarks .more { margin-left: auto; font-size: 17px; font-weight: 600; color: #45494d; }

.site {
  flex: 1;
  display: flex;
  font-family: Lato, sans-serif;
  font-size: 16px;
  color: #4f5660;
}
.rail {
  display: flex;
  flex-direction: column;
  width: 64px;
  padding: 14px 0 7px;
  background: linear-gradient(to right, #f9a90b, #ffc107);
}
.rail a {
  display: flex;
  align-items: center;
  justify-content: center;
  height: 54px;
  color: #fff;
  --hole: #fbb40a;
}
.rail svg { width: 24px; height: 21px; }
.rail .wide { width: 32px; height: 27px; }

.panel {
  width: 240px;
  padding: 11px 16px;
}
.brand {
  padding-bottom: 17px;
  border-bottom: 1px solid #e1e3e5;
  font-size: 28px;
  line-height: 40px;
  text-align: center;
  color: #2a303b;
}
.panel a {
  display: flex;
  align-items: center;
  height: 40px;
  padding: 0 16px 2px;
  color: #4f5660;
}
.panel .back { margin-top: 15px; gap: 10px; padding-left: 18px; }
.panel .back svg { width: 16px; height: 16px; }
.panel h4 { margin-top: 13px; padding-left: 16px; font-size: 16px; line-height: 32px; }
.panel .current { border-radius: 4px; background: #ffc107; color: #fff; font-weight: 700; }

.content {
  flex: 1;
  padding: 21px 25px 21px 23px;
  background: #f6f6f6;
  box-shadow: inset 8px 0 8px -8px rgba(0, 0, 0, .12);
}
.crumb { font-size: 14px; line-height: 20px; color: #7a7e84; }
.content h1 { margin-top: 2px; font-size: 25px; line-height: 30px; font-weight: 600; color: #262b33; }
.content h2 { margin: 22px 0 16px; font-size: 16px; line-height: 20px; font-weight: 600; color: #888b8f; }
.card {
  padding: 20px;
  border-radius: 6px;
  background: #fff;
  line-height: 24px;
  box-shadow: 0 2px 4px rgba(0, 0, 0, .08);
}
.row { display: flex; align-items: center; }
.row label { margin: 0 22px 0 8px; }
.row input {
  appearance: none;
  width: 16px;
  height: 16px;
  margin: 0;
  border: 1px solid #adb5bd;
  border-radius: 50%;
}
.row input[type=radio]:checked { border: 5px solid #212529; }
.row input[type=checkbox] {
  border: none;
  border-radius: 4px;
  background: #212529;
}
.row input[type=checkbox]::after {
  content: "";
  display: block;
  width: 4px;
  height: 7px;
  margin: 3px 0 0 6px;
  border: solid #fff;
  border-width: 0 2px 2px 0;
  transform: rotate(45deg);
}
.card > label { display: block; margin: 15px 0 9px; }
.reason { position: relative; margin-bottom: 16px; }
.reason textarea {
  display: block;
  width: 100%;
  height: 134px;
  padding: 6px 12px;
  border: 1px solid #28a745;
  border-radius: 4px;
  outline: none;
  font: 16px/24px Lato, sans-serif;
  color: #495057;
}
/* same metrics as the textarea, only the squiggles show */
.spelling {
  position: absolute;
  left: 13px;
  top: 7px;
  color: transparent;
  pointer-events: none;
}
.spelling u { text-decoration: underline wavy #e33 1px; text-underline-offset: 2px; }
.valid { position: absolute; right: 11px; top: 12px; width: 16px; height: 14px; }
.danger {
  display: block;
  margin: 32px 0 0 auto;
  width: 75px;
  height: 38px;
  border-radius: 4px;
  background: #dc3545;
  color: #fff;
  font-size: 16px;
  font-weight: 700;
}

/* crisp */
.crisp {
  position: relative;
  display: flex;
  flex-direction: column;
  min-width: 0;
  margin-left: 1px;
  border-top: 1px solid #2d2b2e;
  border-right: 1px solid #3a3c40;
  border-bottom: 1px solid #57534c;
  background: #fff;
  box-shadow: 0 0 16px rgba(0, 0, 0, .5);
}
.titlebar {
  display: flex;
  align-items: center;
  gap: 6px;
  height: 30px;
  padding: 0 17px 0 8px;
  font: 11px "Open Sans", sans-serif;
  color: #111;
}
.titlebar .logo { width: 15px; height: 15px; }
.crisp .wincontrols { margin-left: auto; color: #000; }
.app { flex: 1; display: flex; }
.menu {
  display: flex;
  flex-direction: column;
  align-items: center;
  width: 78px;
  padding: 30px 0 9px;
  background: #1c2a3b;
}
.avatar {
  display: flex;
  align-items: center;
  justify-content: center;
  width: 42px;
  height: 42px;
  margin-bottom: 41px;
  border-radius: 50%;
  background: #f3a81d;
  color: #fff;
  --hole: #f3a81d;
}
.avatar svg { width: 28px; height: 23px; }
.menu a {
  position: relative;
  display: flex;
  align-items: center;
  justify-content: center;
  width: 52px;
  height: 52px;
  color: #8faac8;
}
.menu a svg { width: 24px; height: 24px; }
.menu a:nth-child(2) svg { width: 28px; height: 26px; }
.menu .on { color: #fff; }
.menu .find { color: #75849b; }
.menu .find svg { width: 18px; height: 18px; }
.count {
  position: absolute;
  right: -1px;
  bottom: 1px;
  width: 18px;
  height: 20px;
  border-radius: 2px;
  background: #0094f0;
  color: #fff;
  font-size: 13px;
  font-weight: 700;
  line-height: 20px;
  text-align: center;
}

.workspace { flex: 1; display: flex; flex-direction: column; min-width: 0; }
.banner {
  display: flex;
  align-items: center;
  height: 52px;
  padding: 0 20px 0 23px;
  background: #76869c;
  color: #fff;
}
.banner p { margin: 0 0 2px 18px; font-size: 14px; font-weight: 700; }
.dismiss svg { width: 12px; height: 12px; }
.outline {
  width: 226px;
  height: 34px;
  margin-left: auto;
  border: 1px solid #fff;
  border-radius: 3px;
  font-size: 13px;
  font-weight: 700;
}

.stage { flex: 1; display: flex; background: #161d27; }
.dim-left { width: 58px; overflow: hidden; padding-top: 10px; color: #2b323d; }
.lang {
  display: flex;
  align-items: center;
  gap: 6px;
  height: 36px;
  margin-left: 10px;
  padding-left: 10px;
  border: 1px solid #1d2530;
  border-right: none;
  border-radius: 4px 0 0 4px;
  font-size: 12px;
}
.lang svg { width: 22px; height: 14px; opacity: .5; }
.dim-left h5 { margin: 18px 0 0 28px; font-size: 11px; line-height: 20px; }
.dim-left p { padding-left: 28px; font-size: 13px; line-height: 39px; white-space: nowrap; }
.dim-left h5 + p { margin-top: 9px; }
.dim-left .sel { background: #1a212b; color: #4a505a; margin-left: 10px; padding-left: 18px; }
.dim-left .second { margin-top: 24px; }

.modal { flex: 1; display: flex; flex-direction: column; min-width: 0; background: #fff; }
.modal h3 {
  border-bottom: 1px solid #e0e4eb;
  font-size: 17px;
  font-weight: 400;
  line-height: 58px;
  text-align: center;
  color: #111;
}
.editor {
  flex: 1;
  display: flex;
  flex-direction: column;
  padding: 10px 20px 0;
  background: #f9fafc;
}
.tools { display: flex; align-items: center; gap: 10px; margin-bottom: 10px; }
.group {
  display: flex;
  border: 1px solid #e0e4eb;
  border-radius: 4px;
  background: #fff;
  overflow: hidden;
}
.group button {
  display: flex;
  align-items: center;
  justify-content: center;
  width: 44px;
  height: 40px;
  color: #1c2a3b;
  font-family: Roboto, sans-serif;
  font-size: 19px;
}
.group button + button { border-left: 1px solid #e0e4eb; }
.group svg { width: 20px; height: 18px; }
.group em { font: italic 700 20px "Liberation Mono", monospace; }
.under { border-bottom: 2px solid #1c2a3b; line-height: 17px; }
.colour { border-bottom: 4px solid #0080cc; line-height: 18px; padding: 0 6px; }
.t1 { font-size: 20px; }
.t2 { font-size: 18px; }
.t3 { font-size: 16px; }
.switch { display: flex; margin-left: auto; }
.switch button {
  height: 38px;
  width: 91px;
  border: 1px solid #e0e4eb;
  border-left: none;
  border-radius: 0 4px 4px 0;
  background: #fff;
  font-size: 14px;
  color: #2f3d51;
}
.switch .on {
  width: 63px;
  border: none;
  border-radius: 4px 0 0 4px;
  background: #0094f0;
  color: #fff;
  font-weight: 700;
}
.paper {
  position: relative;
  flex: 1;
  display: flex;
  border: 1px solid #e8edf3;
  border-bottom: none;
  background: #fff;
}
.paper textarea {
  flex: 1;
  padding: 20px 38px;
  border: none;
  outline: none;
  resize: none;
  background: none;
  font: 15px/20px Lato, sans-serif;
  color: #3a3a3a;
}
.ibeam { position: absolute; left: 35px; top: 267px; width: 7px; height: 16px; }
.hint {
  border: solid #e0e4eb;
  border-width: 1px 0;
  font-size: 14px;
  line-height: 39px;
  text-align: center;
  color: #5a6a80;
}
.hint a { margin-left: 6px; }
.modal a { font-weight: 700; color: #0094f0; text-decoration: underline; text-underline-offset: 2px; }
.actions {
  display: flex;
  align-items: center;
  height: 65px;
  padding: 0 20px 2px;
  background: #f9fafc;
  font-size: 14px;
  color: #33425a;
}
.actions i { width: 1px; height: 24px; margin: 0 15px; background: #dfe3ea; }
.language, .view { display: flex; align-items: center; gap: 8px; }
.language { text-decoration: none !important; }
.actions a span { text-decoration: underline; text-underline-offset: 2px; }
.view { margin-left: 2px; text-decoration: none !important; }
.language svg { width: 26px; height: 18px; }
.view svg { width: 14px; height: 14px; }
.category { position: relative; margin-left: 13px; }
.category select {
  appearance: none;
  width: 150px;
  height: 36px;
  padding: 0 12px;
  border: 1px solid #a6c4e2;
  border-radius: 3px;
  background: #fff;
  font: 600 13px Lato, sans-serif;
  color: #1c2a3b;
}
.category svg { position: absolute; right: 16px; top: 15px; width: 10px; height: 6px; }
.red, .blue {
  display: flex;
  align-items: center;
  justify-content: center;
  gap: 9px;
  width: 160px;
  height: 40px;
  border-radius: 3px;
  background: #e10c28;
  color: #fff;
  font-size: 14px;
  font-weight: 700;
  box-shadow: 0 1px 2px rgba(0, 0, 0, .25);
}
.blue { width: 112px; margin-left: 8px; background: #0094f0; }
.red svg { width: 18px; height: 14px; }
.blue svg { width: 15px; height: 15px; }

.dim-right {
  position: relative;
  display: flex;
  flex-direction: column;
  width: 58px;
  background: #41454c;
  color: #2c3139;
}
.leave { position: absolute; right: 21px; top: 21px; }
.leave svg { width: 16px; height: 16px; }
.filter {
  display: flex;
  align-items: center;
  gap: 10px;
  width: 38px;
  height: 34px;
  margin: 9px 0;
  border: 1px solid #3a3e45;
  border-left: none;
  border-radius: 0 3px 3px 0;
}
.filter svg { width: 8px; height: 5px; }
.head {
  width: 28px;
  height: 43px;
  text-align: right;
  white-space: nowrap;
  font-size: 12px;
  line-height: 43px;
}
.head, .filter { flex: none; }
.list { flex: 1; display: flex; justify-content: space-between; border-top: 1px solid #3a3e45; }
.items { width: 42px; padding-top: 7px; }
.items div { height: 55px; padding-top: 10px; border-top: 1px solid #393d44; }
.items div:last-child { height: 24px; }
.items b { display: block; width: 11px; height: 34px; border-radius: 0 3px 3px 0; background: #35454f; }
.items .b { background: #35414f; }
.scroll {
  display: flex;
  flex-direction: column;
  justify-content: flex-end;
  align-items: center;
  width: 15px;
  background: #3d4148;
}
.scroll i { width: 13px; height: 235px; background: #343840; }
.scroll svg { width: 8px; height: 5px; margin: 8px 0; }

/* taskbar */
.taskbar {
  display: flex;
  height: 40px;
  background: #372e25;
  color: #fff;
}
.taskbar button {
  display: flex;
  align-items: center;
  justify-content: center;
  width: 48px;
}
.taskbar > button svg { width: 16px; height: 16px; }
.pinned { display: flex; gap: 1px; margin-left: 3px; }
.pinned button { position: relative; }
.pinned svg { width: 24px; height: 24px; }
.pinned .open::after {
  content: "";
  position: absolute;
  left: 4px;
  right: 4px;
  bottom: 0;
  height: 2px;
  background: #e09fec;
}
.pinned .many::after { background: linear-gradient(to right, #e09fec 77%, #a877b0 77%); }
.pinned .focus { background: #5f594f; }
.pinned .focus::after { left: 0; right: 0; }
.tray {
  display: flex;
  align-items: center;
  gap: 8px;
  margin-right: 3px;
  padding-right: 21px;
  border-right: 1px solid #847e78;
}
.tray svg { width: 16px; height: 16px; }
.tray time {
  font: 11px/18px "Open Sans", sans-serif;
  text-align: center;
}
.tray .notes { margin-left: 7px; }
```
